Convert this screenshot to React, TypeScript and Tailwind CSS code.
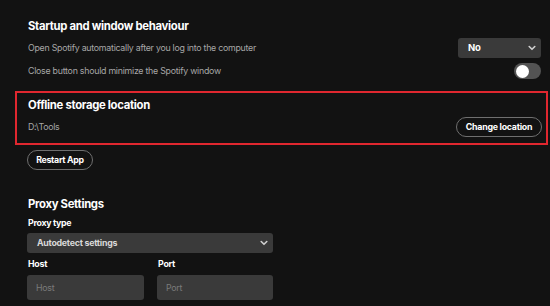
import React from "react";

const Chevron = () => (
  <svg width="8" height="6" viewBox="0 0 8 6" fill="none">
    <path d="M1.2 1.5 L4 4.3 L6.8 1.5" stroke="#d0d0d0" strokeWidth="1.6" strokeLinecap="round" strokeLinejoin="round" />
  </svg>
);

export default function App() {
  return (
    <div
      className="w-[550px] h-[306px] bg-[#121212] overflow-hidden text-white"
      style={{ fontFamily: "Inter, 'Noto Sans', sans-serif" }}
    >
      <div className="pl-[28px] pr-[9px] pt-[18px]">
        <div className="text-[11.3px] leading-[16px] font-bold tracking-[-0.3px]">Startup and window behaviour</div>
        <div className="mt-[4px] flex items-center justify-between h-[20px]">
          <span className="text-[8.8px] tracking-[-0.25px] text-[#a7a7a7]">Open Spotify automatically after you log into the computer</span>
          <div className="w-[83px] h-[20px] rounded-[3px] bg-[#3a3a3a] flex items-center justify-between pl-[10px] pr-[5px]">
            <span className="text-[9.5px] font-bold tracking-[-0.2px]">No</span>
            <Chevron />
          </div>
        </div>
        <div className="mt-[5px] flex items-center justify-between h-[16px]">
          <span className="text-[8.8px] tracking-[-0.25px] text-[#a7a7a7]">Close button should minimize the Spotify window</span>
          <div className="w-[27px] h-[16px] rounded-full bg-[#535353] flex items-center pl-[1.5px]">
            <div className="w-[13px] h-[13px] rounded-full bg-white" />
          </div>
        </div>
      </div>

      <div className="mt-[12px] ml-[15px] w-[533px] border-2 border-[#e0272f] pl-[11px] pr-[4px] pt-[4px] pb-[6px]">
        <div className="text-[11.3px] leading-[16px] font-bold tracking-[-0.3px]">Offline storage location</div>
        <div className="mt-[4px] flex items-center justify-between h-[20px]">
          <span className="text-[8.8px] tracking-[-0.25px] text-[#a7a7a7]">D:\Tools</span>
          <div className="w-[86px] h-[20px] rounded-full border border-[#6f6f6f] flex items-center justify-center text-[8.8px] tracking-[-0.25px] font-bold">
            Change location
          </div>
        </div>
      </div>

      <div className="pl-[27px] mt-[5px]">
        <div className="w-[66px] h-[20px] rounded-full border border-[#6f6f6f] flex items-center justify-center text-[8.8px] tracking-[-0.3px] font-bold">
          Restart App
        </div>
        <div className="mt-[26px] pl-[1px] text-[11.3px] leading-[16px] font-bold tracking-[-0.3px]">Proxy Settings</div>
        <div className="mt-[5px] pl-[1px] text-[8.8px] leading-[12px] font-bold tracking-[-0.3px]">Proxy type</div>
        <div className="mt-[4px] w-[246px] h-[20px] rounded-[3px] bg-[#3a3a3a] flex items-center justify-between pl-[10px] pr-[5px]">
          <span className="text-[8.8px] font-bold tracking-[-0.25px] text-[#d8d8d8]">Autodetect settings</span>
          <Chevron />
        </div>
        <div className="mt-[5px] flex gap-[13px]">
          <div className="w-[117px]">
            <div className="text-[8.8px] leading-[12px] font-bold tracking-[-0.25px] pl-[1px]">Host</div>
            <div className="mt-[5px] h-[25px] rounded-[3px] bg-[#3a3a3a] flex items-center pl-[9px] text-[8.8px] tracking-[-0.25px] text-[#7a7a7a]">Host</div>
          </div>
          <div className="w-[116px]">
            <div className="text-[8.8px] leading-[12px] font-bold tracking-[-0.25px] pl-[1px]">Port</div>
            <div className="mt-[5px] h-[25px] rounded-[3px] bg-[#3a3a3a] flex items-center pl-[9px] text-[8.8px] tracking-[-0.25px] text-[#7a7a7a]">Port</div>
          </div>
        </div>
      </div>
    </div>
  );
}
